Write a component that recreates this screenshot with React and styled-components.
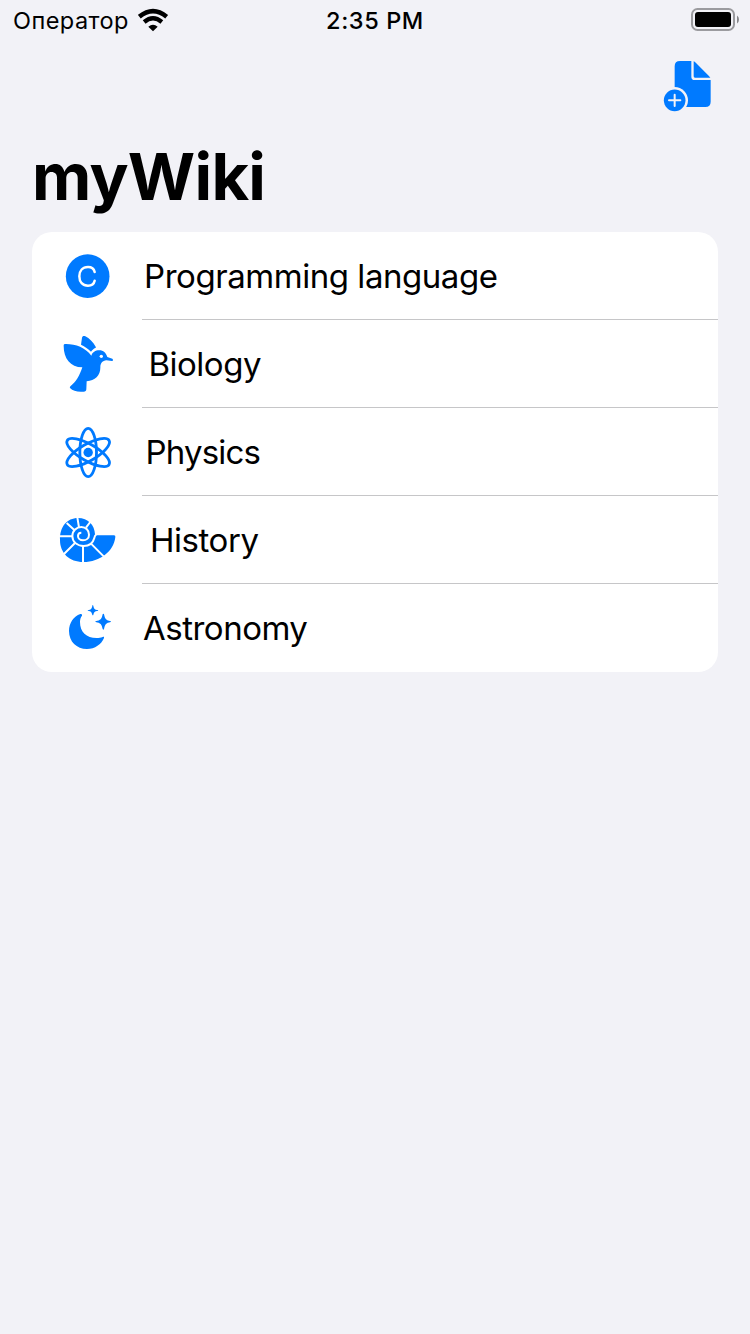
import React from "react";
import styled, { createGlobalStyle } from "styled-components";

const BLUE = "#007aff";
const BG = "#f2f2f7";

const Global = createGlobalStyle`
  html, body { margin: 0; padding: 0; background: ${BG}; }
  body { font-family: Inter, "Liberation Sans", sans-serif; color: #000; }
`;

const Screen = styled.main`
  width: 750px;
  height: 1334px;
  background: ${BG};
  overflow: hidden;
`;

const StatusBar = styled.header`
  display: grid;
  grid-template-columns: 1fr auto 1fr;
  align-items: center;
  height: 40px;
`;

const Carrier = styled.div`
  display: flex;
  align-items: center;
  padding-left: 13px;
  gap: 9.5px;
  font-size: 23.5px;
  letter-spacing: 0.45px;
  white-space: nowrap;
`;

const Clock = styled.time`
  font-size: 23.5px;
  font-weight: 500;
  letter-spacing: 0.6px;
  white-space: nowrap;
`;

const Power = styled.div`
  display: flex;
  justify-content: flex-end;
`;

const Toolbar = styled.nav`
  display: flex;
  justify-content: flex-end;
  padding: 10px 25px 0 0;
  height: 80px;
  box-sizing: border-box;
`;

const IconButton = styled.button`
  width: 70px;
  height: 70px;
  padding: 0;
  border: 0;
  background: none;
`;

const Title = styled.h1`
  margin: 0;
  height: 112px;
  padding: 17px 0 0 32px;
  box-sizing: border-box;
  font-size: 65px;
  font-weight: 700;
  line-height: 80px;
  letter-spacing: -0.75px;
`;

const List = styled.ul`
  list-style: none;
  margin: 0 32px;
  padding: 0;
  border-radius: 20px;
  background: #fff;
  overflow: hidden;
`;

const Row = styled.li`
  display: flex;
  align-items: flex-start;
  height: 88px;
  padding-left: 18px;
`;

const Art = styled.svg`
  display: block;
  flex: none;
`;

const Symbol = styled(Art)`
  margin-top: 8px;
`;

const Cell = styled.div`
  flex: 1;
  height: 88px;
  box-sizing: border-box;
  margin-left: 17px;
  border-bottom: 1px solid ${(p) => (p.$last ? "transparent" : "#c6c6c8")};
`;

const Name = styled.span`
  display: block;
  margin-left: ${(p) => p.$inset}px;
  font-size: 33px;
  line-height: 88px;
  letter-spacing: ${(p) => p.$track}px;
  white-space: nowrap;
`;

const Glyph = ({ children, label }) => (
  <Symbol width="75" height="75" viewBox="0 0 225 225" fill={BLUE} role="img" aria-label={label}>
    {children}
  </Symbol>
);

const CIcon = () => (
  <Glyph label="C">
    <circle cx="113" cy="108.500" r="65.500" />
    <path d="M134 96C132 87 124 81 114 81C98 81 88 92 88 109C88 126 98 137 114 137C124 137 132 131 134 122" fill="none" stroke="#fff" strokeWidth="7.500" strokeLinecap="round" />
  </Glyph>
);

const BirdIcon = () => (
  <Glyph label="Bird">
    <path d="M41 53C41 49 43 48 48 48C78 48 106 59 124 83C127 73 136 67 148 67C160 67 168 75 172 87L187 92C190 94 190 99 186 99L169 97C158 99 151 104 151 119C151 143 135 157 110 160L109 184C109 188 106 191 101 191C83 193 69 189 60 180C59 178 60 176 62 174C78 162 89 143 97 118C61 117 41 92 41 53Z" />
    <path d="M93 50L96 29C97 24 101 23 106 25C118 31 129 42 137 56C138 58 138 59 136 60C131 62 127 66 123 71C115 63 105 56 93 50Z" />
    <circle cx="154" cy="85" r="5" fill="#fff" />
  </Glyph>
);

const AtomIcon = () => (
  <Glyph label="Atom">
    <g fill="none" stroke={BLUE} strokeWidth="8.500">
      {[0, 60, 120].map((a) => (
        <ellipse key={a} cx="114.500" cy="109.500" rx="25" ry="72.500" transform={`rotate(${a} 114.500 109.500)`} />
      ))}
    </g>
    <circle cx="114.500" cy="109.500" r="14" />
  </Glyph>
);

const ShellIcon = () => (
  <Glyph label="Shell">
    <path d="M30 108C29 68 51 42 84 42C114 42 134 63 135 91Q135 94 139 94L192 94Q197 94 196 99C191 142 151 174 100 174C58 174 30 147 30 108Z" />
    <g fill="none" stroke="#fff" strokeWidth="6" strokeLinejoin="round">
      <path d="M139 92C134 94 134 98 133 102C129 117 117 126 101 126C81 126 67 113 67 96C67 80 80 69 94 69C108 69 117 79 117 92C117 103 109 109 99 109C90 109 84 103 84 96C84 90 88 86 94 86" />
      <path d="M87 70L82 40M73 78L50 57M66 97L28 97M75 117L42 150M99 126V177M123 119L164 160M108 71L123 51" />
    </g>
  </Glyph>
);

const MoonIcon = () => (
  <Glyph label="Moon and stars">
    <path d="M96 69C96 66 94 65 91 66C71 73 57 93 57 117C57 149 80 171 111 171C135 171 154 157 162 138C163 135 161 133 158 135C152 137 147 138 140 138C109 138 90 120 90 90C90 82 92 76 96 71Z" />
    <path d="M128 39Q129 39 130 41C132 51 134 53 144 54Q145 55 144 56C134 58 132 60 130 69Q128 71 127 69C125 60 123 58 114 56Q112 55 114 54C123 53 125 51 127 41Q127 39 128 39Z" />
    <path d="M160 65Q162 65 162 67C165 81 168 85 182 88Q185 89 182 90C168 93 165 97 162 111Q160 115 158 111C155 97 152 93 137 90Q134 89 137 88C152 85 155 81 158 67Q158 65 160 65Z" />
  </Glyph>
);

const DocumentAddIcon = () => (
  <Art width="70" height="70" viewBox="0 0 210 210" fill={BLUE}>
    <path d="M59 49Q59 33 75 33H109V80Q109 90 119 90H167V155Q167 171 151 171H75Q59 171 59 155Z" />
    <path d="M116 34Q119 35 123 39L161 77Q165 81 166 83H120Q116 83 116 79Z" />
    <circle cx="59" cy="151" r="40" fill={BG} />
    <circle cx="59" cy="151" r="32.500" />
    <path d="M59 134V168M42 151H76" stroke={BG} strokeWidth="6" strokeLinecap="round" />
  </Art>
);

const WifiIcon = () => (
  <Art width="31" height="24" viewBox="0 0 93 72" fill="none" stroke="#000">
    <path d="M4 26Q45 -7 86 26" strokeWidth="13.500" />
    <path d="M18.500 42Q45 20 71.500 42" strokeWidth="13" />
    <path d="M45 70L31 56Q45 45 59 56Z" fill="#000" stroke="none" />
  </Art>
);

const BatteryIcon = () => (
  <Art width="70" height="40" viewBox="0 0 70 40">
    <rect x="12" y="9" width="42" height="21" rx="5.500" fill="none" stroke="#9b9b9f" strokeWidth="2" />
    <rect x="15" y="12" width="36" height="15" rx="3" />
    <path d="M57 15.500Q59 17 59 19.500T57 23.500Z" fill="#87878a" />
  </Art>
);

const topics = [
  { name: "Programming language", Icon: CIcon, inset: 2, track: -0.45 },
  { name: "Biology", Icon: BirdIcon, inset: 6.5, track: -0.5 },
  { name: "Physics", Icon: AtomIcon, inset: 3.5, track: -0.8 },
  { name: "History", Icon: ShellIcon, inset: 8, track: -0.45 },
  { name: "Astronomy", Icon: MoonIcon, inset: 1, track: -0.5 },
];

const isLast = (i) => i === topics.length - 1;

export default function App() {
  return (
    <Screen>
      <Global />
      <StatusBar>
        <Carrier>
          Оператор
          <WifiIcon />
        </Carrier>
        <Clock>2:35 PM</Clock>
        <Power>
          <BatteryIcon />
        </Power>
      </StatusBar>
      <Toolbar>
        <IconButton aria-label="New page">
          <DocumentAddIcon />
        </IconButton>
      </Toolbar>
      <Title>myWiki</Title>
      <List>
        {topics.map(({ name, Icon, inset, track }, i) => (
          <Row key={name}>
            <Icon />
            <Cell $last={isLast(i)}>
              <Name $inset={inset} $track={track}>{name}</Name>
            </Cell>
          </Row>
        ))}
      </List>
    </Screen>
  );
}
